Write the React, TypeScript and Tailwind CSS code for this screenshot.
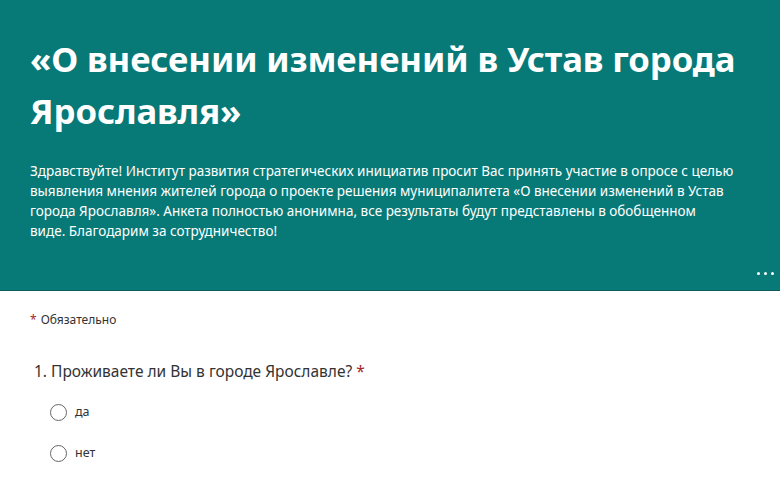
import React from 'react';

export default function App() {
  return (
    <div className="w-[780px] h-[486px] overflow-hidden bg-white" style={{ fontFamily: '"Noto Sans", "Open Sans", sans-serif' }}>
      {/* Header */}
      <div className="relative h-[291px] bg-[#077977] border-b border-[#0b5c5c] px-[30px] pt-[33px]">
        <h1 className="text-[34.7px] leading-[52px] font-bold text-white tracking-[-0.1px]">
          «О внесении изменений в Устав города Ярославля»
        </h1>
        <p className="mt-[24px] text-[13.5px] leading-[20px] text-white whitespace-nowrap">
          Здравствуйте! Институт развития стратегических инициатив просит Вас принять участие в опросе с целью
          <br />
          выявления мнения жителей города о проекте решения муниципалитета «О внесении изменений в Устав
          <br />
          города Ярославля». Анкета полностью анонимна, все результаты будут представлены в обобщенном
          <br />
          виде. Благодарим за сотрудничество!
        </p>
        <div className="absolute right-[6px] bottom-[15px] flex gap-[4px]">
          <span className="w-[3px] h-[3px] rounded-full bg-white" />
          <span className="w-[3px] h-[3px] rounded-full bg-white" />
          <span className="w-[3px] h-[3px] rounded-full bg-white" />
        </div>
      </div>

      {/* Body */}
      <div className="px-[30px] pt-[20px]">
        <div className="text-[12px] text-[#333]">
          <span className="text-[#a4262c] mr-[4px]">*</span>Обязательно
        </div>

        <div className="mt-[31px] pl-[4px] text-[15.5px] text-[#333]">
          1. Проживаете ли Вы в городе Ярославле? <span className="text-[#a4262c]">*</span>
        </div>

        <div className="mt-[20px] pl-[20px] flex flex-col gap-[22px]">
          {['да', 'нет'].map((o) => (
            <label key={o} className="flex items-center gap-[8px] text-[12.5px] text-[#333]">
              <span className="w-[17px] h-[17px] rounded-full border border-[#666] bg-white" />
              {o}
            </label>
          ))}
        </div>
      </div>
    </div>
  );
}
